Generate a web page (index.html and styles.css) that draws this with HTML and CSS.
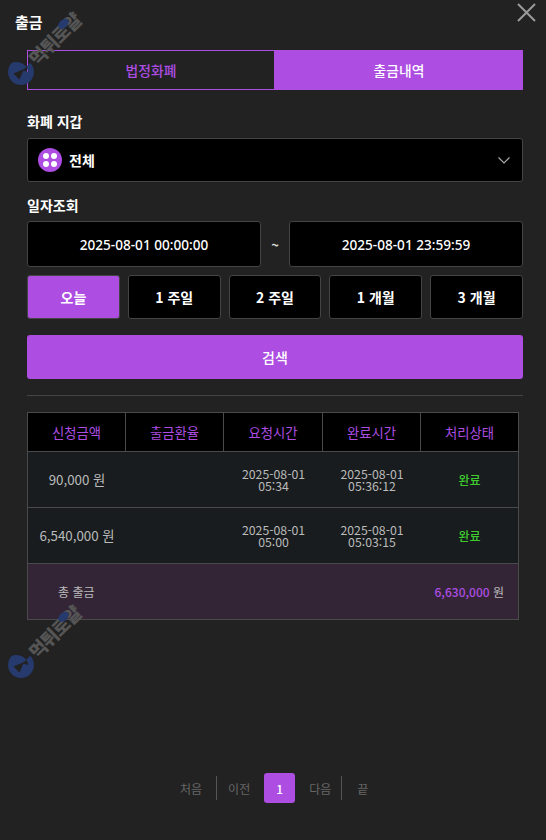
FILE: index.html
```html
<!DOCTYPE html>
<html lang="ko">
<head>
<meta charset="utf-8">
<title>출금</title>
<link rel="stylesheet" href="styles.css">
</head>
<body>
<div class="page">
  <header class="head">
    <h1 class="title">출금</h1>
    <svg class="close" width="19" height="19" viewBox="0 0 19 19"><path d="M1 1L18 18M18 1L1 18" stroke="#9a9a9a" stroke-width="2" fill="none"/></svg>
  </header>
  <main class="content">
    <div class="tabs">
      <div class="tab">법정화폐</div>
      <div class="tab tab-on">출금내역</div>
    </div>
    <div class="label label-wallet">화폐 지갑</div>
    <div class="select">
      <span class="coin"><i></i><i></i><i></i><i></i></span>
      <span class="select-text">전체</span>
      <svg class="chev" width="12" height="7" viewBox="0 0 12 7"><path d="M0.5 0.5L6 6L11.5 0.5" stroke="#aaa" stroke-width="1.2" fill="none"/></svg>
    </div>
    <div class="label label-date">일자조회</div>
    <div class="dates">
      <div class="date">2025-08-01 00:00:00</div>
      <span class="tilde">~</span>
      <div class="date">2025-08-01 23:59:59</div>
    </div>
    <div class="ranges">
      <div class="range range-on">오늘</div>
      <div class="range">1 주일</div>
      <div class="range">2 주일</div>
      <div class="range">1 개월</div>
      <div class="range">3 개월</div>
    </div>
    <div class="search">검색</div>
    <hr class="rule">
    <div class="table">
      <div class="row row-head">
        <div class="cell">신청금액</div><div class="cell">출금환율</div><div class="cell">요청시간</div><div class="cell">완료시간</div><div class="cell">처리상태</div>
      </div>
      <div class="row row-body">
        <div class="cell amount">90,000 원</div><div class="cell"></div><div class="cell time">2025-08-01<br>05:34</div><div class="cell time">2025-08-01<br>05:36:12</div><div class="cell ok">완료</div>
      </div>
      <div class="row row-body">
        <div class="cell amount">6,540,000 원</div><div class="cell"></div><div class="cell time">2025-08-01<br>05:00</div><div class="cell time">2025-08-01<br>05:03:15</div><div class="cell ok">완료</div>
      </div>
      <div class="row row-total">
        <div class="total-label">총 출금</div>
        <div class="total-sum"><span class="sum">6,630,000</span> 원</div>
      </div>
    </div>
  </main>
  <nav class="pager">
    <span class="pg pg-first">처음</span><span class="sep"></span><span class="pg pg-prev">이전</span>
    <span class="pg-on">1</span>
    <span class="pg pg-next">다음</span><span class="sep"></span><span class="pg pg-last">끝</span>
  </nav>
  <div class="mark mark-a">
    <svg class="mark-logo" width="28" height="28" viewBox="0 0 26 26"><path d="M13 1a12 12 0 1 0 12 12h-5l-2 5 -3 -5h5a12 12 0 0 0 -7 -12Z" fill="#263a6e"/><path d="M7 9L17 13L7 17Z" fill="#222"/></svg>
    <span class="mark-text">먹튀로얄<i class="mark-dot"></i></span>
  </div>
  <div class="mark mark-b">
    <svg class="mark-logo" width="28" height="28" viewBox="0 0 26 26"><path d="M13 1a12 12 0 1 0 12 12h-5l-2 5 -3 -5h5a12 12 0 0 0 -7 -12Z" fill="#263a6e"/><path d="M7 9L17 13L7 17Z" fill="#222"/></svg>
    <span class="mark-text">먹튀로얄<i class="mark-dot"></i></span>
  </div>
</div>
</body>
</html>
```
FILE: styles.css
```css
* { box-sizing: border-box; }
html, body { margin: 0; height: 100%; }
body {
  background: #222222;
  color: #fff;
  font-family: "Noto Sans CJK KR", "Noto Sans", sans-serif;
  overflow: hidden;
}
.page { position: relative; width: 546px; height: 840px; display: flex; flex-direction: column; }
.head { height: 50px; padding: 13px 0 0 15px; flex: none; }
.title { margin: 0; font-size: 15px; line-height: 18px; font-weight: 700; }
.close { position: absolute; left: 517px; top: 3px; }
.content { padding: 0 23px 0 27px; flex: none; }
.tabs { display: flex; height: 40px; }
.tab {
  width: 248px; display: flex; align-items: center; justify-content: center;
  font-size: 13.8px; font-weight: 500; color: #ad4de2;
  border: 1px solid #ad4de2; background: #222;
}
.tab-on { background: #ad4de2; color: #fff; }
.label { font-size: 14px; line-height: 20px; font-weight: 700; }
.label-wallet { margin-top: 21px; }
.label-date { margin-top: 13px; }
.select {
  margin-top: 7px; height: 44px; background: #000; border: 1px solid #444; border-radius: 3px;
  display: flex; align-items: center; padding: 0 12px 0 10px;
}
.coin {
  width: 24px; height: 24px; border-radius: 50%; background: #ad4de2;
  display: grid; grid-template-columns: 6px 6px; grid-auto-rows: 6px; gap: 2px;
  justify-content: center; align-content: center; flex: none;
}
.coin i { background: #fff; border-radius: 50%; }
.select-text { margin-left: 7px; font-size: 14px; font-weight: 700; flex: 1; }
.dates { margin-top: 6px; display: flex; align-items: center; }
.date {
  flex: 1; height: 46px; background: #000; border: 1px solid #444; border-radius: 3px;
  display: flex; align-items: center; justify-content: center;
  font-family: "Noto Sans", sans-serif; font-size: 13.6px; font-weight: 500;
}
.tilde { width: 28px; text-align: center; font-size: 13px; font-weight: 700; color: #ddd; }
.ranges { margin-top: 8px; display: flex; gap: 8px; }
.range {
  flex: 1; height: 44px; background: #000; border: 1px solid #444; border-radius: 3px;
  display: flex; align-items: center; justify-content: center;
  font-size: 14px; font-weight: 700;
}
.range-on { background: #ad4de2; }
.search {
  margin-top: 16px; height: 44px; background: #ad4de2; border-radius: 3px;
  display: flex; align-items: center; justify-content: center;
  font-size: 14px; font-weight: 500;
}
.rule { margin: 16px 0 0; border: 0; border-top: 1px solid #444; }
.table { margin-top: 16px; width: 492px; border: 1px solid #4a4a4a; }
.row { display: grid; grid-template-columns: 98px 98px 99px 98px 1fr; }
.row-head { height: 38px; background: #000; color: #ad4de2; font-size: 13.33px; }
.row-head .cell { border-right: 1px solid #4a4a4a; }
.row-head .cell:last-child { border-right: 0; }
.row-body { height: 56px; background: #181c1e; border-top: 1px solid #4a4a4a; color: #bbb; font-size: 12.3px; }
.cell { display: flex; align-items: center; justify-content: center; text-align: center; }
.amount { font-size: 13.33px; }
.time { line-height: 12px; }
.ok { color: #3ecb2d; font-weight: 500; font-size: 12px; }
.row-total {
  height: 56px; background: #342536; border-top: 1px solid #4a4a4a; color: #bbb; font-size: 12px;
  display: flex; align-items: center; justify-content: space-between; padding: 0 14px 0 30px;
}
.sum { color: #ad4de2; font-weight: 500; }
.pager {
  position: absolute; left: 0; right: 0; top: 773px; height: 30px;
  display: flex; align-items: center; padding-left: 180px;
  font-size: 12px; color: #666;
}
.pg { flex: none; }
.pg-first { margin-right: 14px; }
.pg-prev { margin: 0 14px 0 11px; }
.pg-next { margin: 0 10px 0 14px; }
.pg-last { margin-left: 15px; }
.sep { width: 1px; height: 24px; background: #555; flex: none; }
.pg-on {
  width: 31px; height: 30px; background: #ad4de2; color: #fff; border-radius: 3px; flex: none;
  display: flex; align-items: center; justify-content: center; font-weight: 500;
}
.mark {
  position: absolute; display: flex; align-items: center; gap: 1px;
  transform: rotate(-45deg); transform-origin: 14px 14px; pointer-events: none;
}
.mark-a { left: 7px; top: 58px; }
.mark-b { left: 7px; top: 651px; }
.mark-logo { flex: none; }
.mark-text { position: relative; font-size: 18.5px; line-height: 26px; font-weight: 900; color: #555; letter-spacing: -1px; }
.mark-dot { position: absolute; left: 43px; top: 5px; width: 12px; height: 8px; border-radius: 50%; background: #263a6e; }
```
